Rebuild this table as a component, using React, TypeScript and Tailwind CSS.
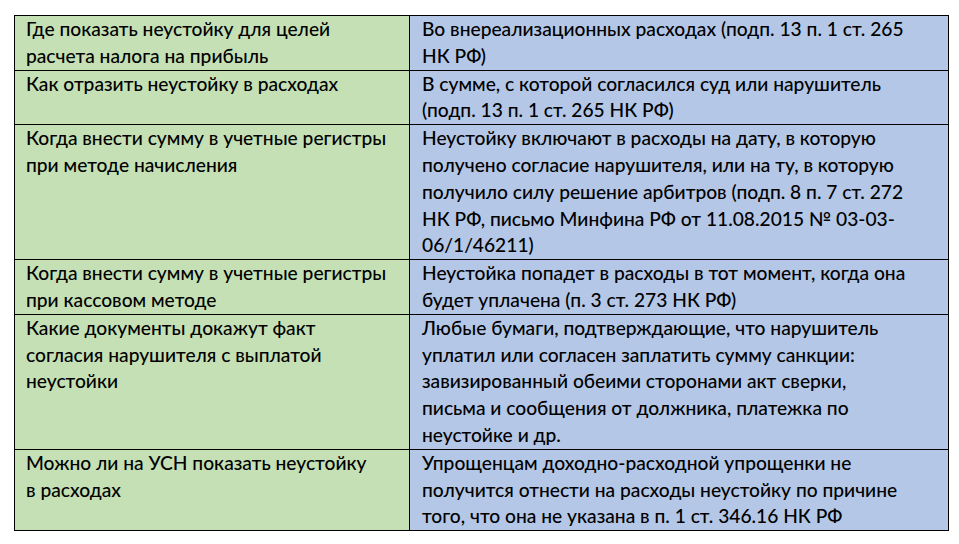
const rows: { q: string[]; a: string[] }[] = [
  {
    q: ['Где показать неустойку для целей', 'расчета налога на прибыль'],
    a: ['Во внереализационных расходах (подп. 13 п. 1 ст. 265', 'НК РФ)'],
  },
  {
    q: ['Как отразить неустойку в расходах'],
    a: ['В сумме, с которой согласился суд или нарушитель', '(подп. 13 п. 1 ст. 265 НК РФ)'],
  },
  {
    q: ['Когда внести сумму в учетные регистры', 'при методе начисления'],
    a: [
      'Неустойку включают в расходы на дату, в которую',
      'получено согласие нарушителя, или на ту, в которую',
      'получило силу решение арбитров (подп. 8 п. 7 ст. 272',
      'НК РФ, письмо Минфина РФ от 11.08.2015 № 03-03-',
      '06/1/46211)',
    ],
  },
  {
    q: ['Когда внести сумму в учетные регистры', 'при кассовом методе'],
    a: ['Неустойка попадет в расходы в тот момент, когда она', 'будет уплачена (п. 3 ст. 273 НК РФ)'],
  },
  {
    q: ['Какие документы докажут факт', 'согласия нарушителя с выплатой', 'неустойки'],
    a: [
      'Любые бумаги, подтверждающие, что нарушитель',
      'уплатил или согласен заплатить сумму санкции:',
      'завизированный обеими сторонами акт сверки,',
      'письма и сообщения от должника, платежка по',
      'неустойке и др.',
    ],
  },
  {
    q: ['Можно ли на УСН показать неустойку', 'в расходах'],
    a: [
      'Упрощенцам доходно-расходной упрощенки не',
      'получится отнести на расходы неустойку по причине',
      'того, что она не указана в п. 1 ст. 346.16 НК РФ',
    ],
  },
]

function Lines({ items }: { items: string[] }) {
  return (
    <>
      {items.map((t, i) => (
        <div key={i} className="whitespace-nowrap">
          {t}
        </div>
      ))}
    </>
  )
}

export default function App() {
  return (
    <div className="w-[959px] h-[544px] bg-white pt-[15px] pl-[14px] font-['Lato','Liberation_Sans',sans-serif] font-medium text-[19.2px] leading-[26.8px] text-black">
      <div className="w-[935px] border-[1.5px] border-black">
        {rows.map((r, i) => (
          <div
            key={i}
            className={`grid grid-cols-[395px_1fr] ${i > 0 ? 'border-t border-black' : ''}`}
          >
            <div className="bg-[#c5e0b4] border-r border-black pl-[11px]">
              <Lines items={r.q} />
            </div>
            <div className="bg-[#b4c7e7] pl-[12px]">
              <Lines items={r.a} />
            </div>
          </div>
        ))}
      </div>
    </div>
  )
}
